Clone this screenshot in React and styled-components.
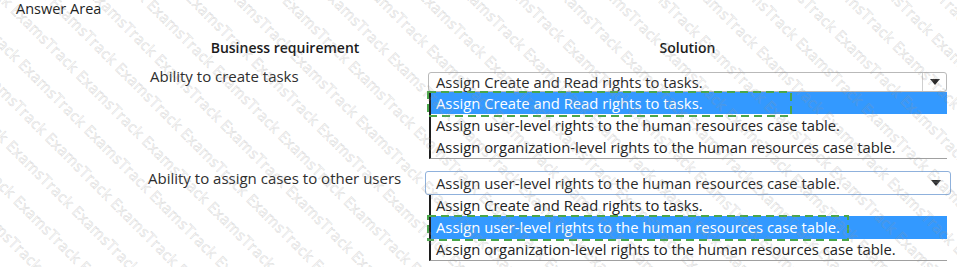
import React from "react"
import styled, { createGlobalStyle } from 'styled-components';

const GlobalStyle = createGlobalStyle`
  body {
    margin: 0;
    background: #ffffff;
    font-family: "Open Sans", "Noto Sans", sans-serif;
    color: #222;
  }
`

const Page = styled.div`
  position: relative;
  width: 957px;
  height: 267px;
  overflow: hidden;
  background: #fff;
`

const Title = styled.div`
  padding-left: 16px;
  font-size: 14.5px;
  line-height: 17px;
  color: #1e1e1e;
`

const Table = styled.div`
  display: flex;
  flex-direction: column;
  margin-left: 150px;
  width: 797px;
`

const Row = styled.div`
  display: grid;
  grid-template-columns: 270px 519px;
  column-gap: 8px;
  margin-top: ${p => p.$top}px;
`

const Head = styled.div`
  font-weight: 600;
  font-size: 14px;
  line-height: 20px;
  text-align: center;
  color: #1a1a1a;
`

const Label = styled.div`
  font-size: 15px;
  line-height: 20px;
  color: #2e2e2e;
  margin-left: ${p => p.$shift || 0}px;
`

const Dropdown = styled.div`
  display: flex;
  flex-direction: column;
  margin-top: ${p => p.$top}px;
`

const Select = styled.div`
  display: flex;
  align-items: center;
  height: ${p => (p.$focused ? 22 : 18)}px;
  margin: ${p => (p.$focused ? '0 -4px 0 -3px' : '0')};
  border: 1px solid ${p => (p.$focused ? '#8fb1dc' : '#b9b9b9')};
  border-radius: 3px;
  background: #fff;
  font-size: 14.8px;
  color: #2a2a2a;
`

const SelectText = styled.div`
  flex: 1;
  padding-left: ${p => (p.$focused ? 10 : 7)}px;
  white-space: nowrap;
`

const Arrow = styled.div`
  width: 23px;
  height: 100%;
  display: flex;
  align-items: center;
  justify-content: center;
  border-left: ${p => (p.$focused ? 'none' : '1px solid #cfcfcf')};
  margin-right: ${p => (p.$focused ? 3 : 0)}px;
`

const List = styled.div`
  display: flex;
  flex-direction: column;
  margin-left: 1px;
  border-left: 2px solid #1c1c1c;
  border-bottom: 1px solid #a0a0a0;
`

const Option = styled.div`
  position: relative;
  height: ${p => p.$h}px;
  line-height: ${p => p.$h}px;
  padding-left: 5px;
  font-size: 14.8px;
  white-space: nowrap;
  background: ${p => (p.$selected ? '#3399ff' : 'transparent')};
  color: ${p => (p.$selected ? '#ffffff' : '#222')};
`

const Marker = styled.svg`
  position: absolute;
  left: -4px;
  top: -1px;
  overflow: visible;
  pointer-events: none;
`

const Watermark = styled.div`
  position: absolute;
  inset: 0;
  overflow: hidden;
  pointer-events: none;
  z-index: 5;
`

const WaterLines = styled.div`
  position: absolute;
  left: -700px;
  top: -900px;
  width: 2400px;
  transform: rotate(45deg);
  transform-origin: 1200px 1000px;
  font-family: "Open Sans", sans-serif;
  font-size: 15px;
  line-height: 33.2px;
  white-space: nowrap;
  color: transparent;
  -webkit-text-stroke: 0.6px rgba(150, 150, 150, 0.32);
  letter-spacing: 0.5px;
`

function DashBox({ width, height }) {
  return (
    <Marker width={width} height={height}>
      <rect x="1" y="1" width={width - 2} height={height - 2} fill="none"
        stroke="#4aa64a" strokeWidth="2" strokeDasharray="8 5" />
    </Marker>
  )
}

function Caret() {
  return (
    <svg width="10" height="6" viewBox="0 0 10 6">
      <polygon points="0,0 10,0 5,6" fill="#2b2b2b" />
    </svg>
  )
}

const options = [
  'Assign Create and Read rights to tasks.',
  'Assign user-level rights to the human resources case table.',
  'Assign organization-level rights to the human resources case table.',
]

function Choice({ value, focused, top, heights, box }) {
  return (
    <Dropdown $top={top}>
      <Select $focused={focused}>
        <SelectText $focused={focused}>{options[value]}</SelectText>
        <Arrow $focused={focused}><Caret /></Arrow>
      </Select>
      <List>
        {options.map((o, i) => (
          <Option key={i} $h={heights[i]} $selected={i === value}>
            {o}
            {i === value && <DashBox width={box[0]} height={box[1]} />}
          </Option>
        ))}
      </List>
    </Dropdown>
  )
}

export default function App() {
  const line = Array(40).fill('ExamsTrack').join('   ')
  return (
    <Page>
      <GlobalStyle />
      <Title>Answer Area</Title>
      <Table>
        <Row $top={21}>
          <Head>Business requirement</Head>
          <Head>Solution</Head>
        </Row>
        <Row $top={8}>
          <Label>Ability to create tasks</Label>
          <Choice value={0} top={6} heights={[22, 23, 21]} box={[365, 26]} />
        </Row>
        <Row $top={9}>
          <Label $shift={-2}>Ability to assign cases to other users</Label>
          <Choice value={1} focused top={3} heights={[21, 23, 21]} box={[422, 26]} />
        </Row>
      </Table>
      <Watermark>
        <WaterLines>
          {Array.from({ length: 70 }).map((_, i) => (
            <div key={i} style={{ marginLeft: (i % 3) * -22 }}>{line}</div>
          ))}
        </WaterLines>
      </Watermark>
    </Page>
  )
}
